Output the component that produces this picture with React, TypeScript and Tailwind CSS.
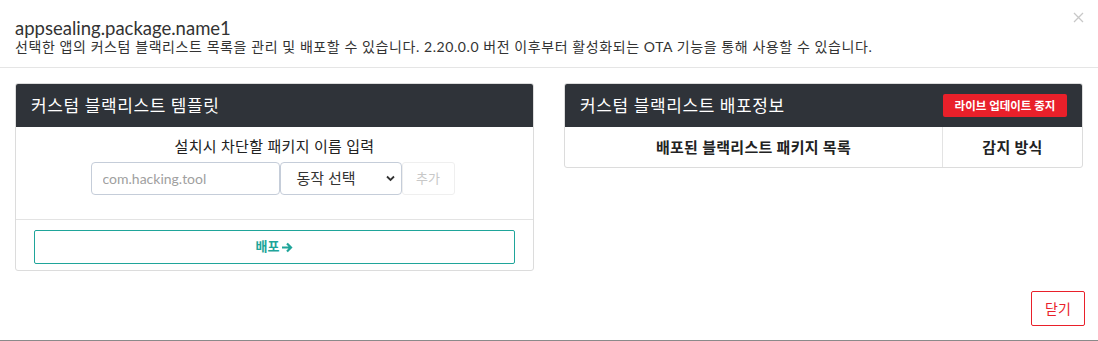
import React from "react";

const font = { fontFamily: 'Lato, "Noto Sans CJK KR", sans-serif' };

export default function App() {
  return (
    <div
      className="w-[1098px] h-[341px] bg-white border-b border-[#8a8a8a] text-[#333] overflow-hidden relative"
      style={font}
    >
      {/* header */}
      <div className="h-[68px] border-b border-[#e5e5e5] px-[15px] pt-[18px] relative">
        <div className="text-[18.5px] leading-[20px] text-[#333]">appsealing.package.name1</div>
        <div className="text-[14px] leading-[18px] tracking-[0.58px] text-[#333]">
          선택한 앱의 커스텀 블랙리스트 목록을 관리 및 배포할 수 있습니다. 2.20.0.0 버전 이후부터 활성화되는 OTA 기능을 통해 사용할 수 있습니다.
        </div>
        <button className="absolute right-[13px] top-[10px] w-[14px] h-[14px] flex items-center justify-center">
          <svg width="11" height="11" viewBox="0 0 11 11">
            <path d="M1 1 L10 10 M10 1 L1 10" stroke="#c8c8c8" strokeWidth="1.3" />
          </svg>
        </button>
      </div>

      {/* body */}
      <div className="flex gap-[30px] px-[15px] pt-[15px]">
        {/* left card */}
        <div className="w-[520px] border border-[#dcdcdc] rounded-[3px] flex flex-col">
          <div className="h-[43px] bg-[#2f3339] rounded-t-[2px] flex items-center px-[15px]">
            <span className="text-white text-[17px] tracking-[0.6px]">커스텀 블랙리스트 템플릿</span>
          </div>
          <div className="flex flex-col items-center pt-[9px] pb-[24px]">
            <div className="text-[15px] leading-[20px] tracking-[0.3px] text-[#222]">설치시 차단할 패키지 이름 입력</div>
            <div className="flex mt-[6px] mr-[4px]">
              <input
                className="w-[189px] h-[33px] border border-[#c5cdd9] rounded-[4px] px-[11px] text-[14px] text-[#555] placeholder:text-[#a0a0a0] outline-none"
                placeholder="com.hacking.tool"
                style={font}
              />
              <div className="w-[122px] h-[33px] border border-[#c5cdd9] rounded-[4px] flex items-center pl-[16px] pr-[6px] text-[15px] text-[#333]">
                <span className="flex-1">동작 선택</span>
                <svg width="9" height="7" viewBox="0 0 9 7">
                  <path d="M1 1.5 L4.5 5 L8 1.5" stroke="#333" strokeWidth="1.8" fill="none" />
                </svg>
              </div>
              <button className="w-[53px] h-[33px] border border-[#efefef] rounded-[3px] text-[13px] text-[#c8c8c8]">
                추가
              </button>
            </div>
          </div>
          <div className="border-t border-[#e3e3e3] px-[18px] pt-[10px] pb-[6px]">
            <button className="w-full h-[34px] border border-[#1fa59a] rounded-[2px] flex items-center justify-center gap-[2px] text-[13px] font-bold text-[#1fa59a]">
              배포
              <svg width="12" height="11" viewBox="0 0 12 11">
                <path d="M1 5.5 H10 M6 1.5 L10 5.5 L6 9.5" stroke="#1fa59a" strokeWidth="2.2" fill="none" />
              </svg>
            </button>
          </div>
        </div>

        {/* right card */}
        <div className="w-[520px] self-start border border-[#dcdcdc] rounded-[3px]">
          <div className="h-[43px] bg-[#2f3339] rounded-t-[2px] flex items-center justify-between pl-[15px] pr-[15px]">
            <span className="text-white text-[17px] tracking-[0.6px]">커스텀 블랙리스트 배포정보</span>
            <button className="w-[124px] h-[23px] bg-[#e9202a] rounded-[2px] text-white text-[11.5px] font-bold">
              라이브 업데이트 중지
            </button>
          </div>
          <div className="flex h-[40px] text-[15px] tracking-[0.3px] font-bold text-[#222]">
            <div className="w-[378px] border-r border-[#e3e3e3] flex items-center justify-center">
              배포된 블랙리스트 패키지 목록
            </div>
            <div className="flex-1 flex items-center justify-center">감지 방식</div>
          </div>
        </div>
      </div>

      {/* footer */}
      <div className="flex justify-end pr-[13px] pt-[20px]">
        <button className="w-[54px] h-[35px] border border-[#e9202a] rounded-[2px] text-[14px] text-[#e9202a]">
          닫기
        </button>
      </div>
    </div>
  );
}
